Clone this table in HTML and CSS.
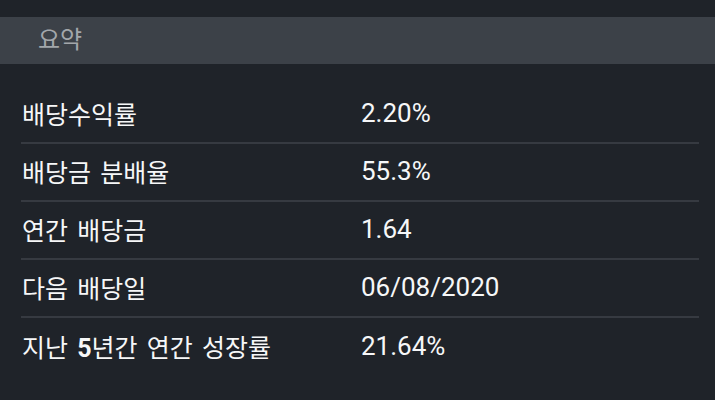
FILE: index.html
```html
<!DOCTYPE html>
<html lang="ko">
<head>
  <meta charset="UTF-8">
  <meta name="viewport" content="width=device-width, initial-scale=1.0">
  <title>요약</title>
  <link rel="stylesheet" href="styles.css">
</head>
<body>
  <div class="summary">
    <div class="summary-header">요약</div>

    <div class="summary-list">
      <div class="summary-row">
        <span class="label">배당수익률</span>
        <span class="value">2.20%</span>
      </div>
      <div class="summary-row">
        <span class="label">배당금 분배율</span>
        <span class="value">55.3%</span>
      </div>
      <div class="summary-row">
        <span class="label">연간 배당금</span>
        <span class="value">1.64</span>
      </div>
      <div class="summary-row">
        <span class="label">다음 배당일</span>
        <span class="value">06/08/2020</span>
      </div>
      <div class="summary-row">
        <span class="label">지난 <b>5</b>년간 연간 성장률</span>
        <span class="value">21.64%</span>
      </div>
    </div>
  </div>
</body>
</html>
```

FILE: styles.css
```css
* { box-sizing: border-box; }
body {
  margin: 0;
  background: #1f2329;
  color: #f6f7f8;
  font-family: Roboto, "Noto Sans CJK KR", sans-serif;
}
.summary {
  padding-top: 17px;
}
.summary-header {
  height: 47px;
  background: #3c4148;
  color: #a3a7ab;
  font-size: 24px;
  line-height: 47px;
  padding-left: 38px;
}
.summary-list {
  margin: 22px 16px 0 21px;
}
.summary-row {
  display: flex;
  align-items: center;
  height: 58px;
  border-bottom: 2px solid #363a41;
  padding-bottom: 2px;
}
.summary-row:last-child {
  border-bottom: none;
}
.label {
  width: 340px;
  padding-left: 1px;
  font-size: 25px;
  word-spacing: 3px;
}
.label b {
  font-weight: 700;
}
.value {
  flex: 1;
  font-size: 26px;
}
```
